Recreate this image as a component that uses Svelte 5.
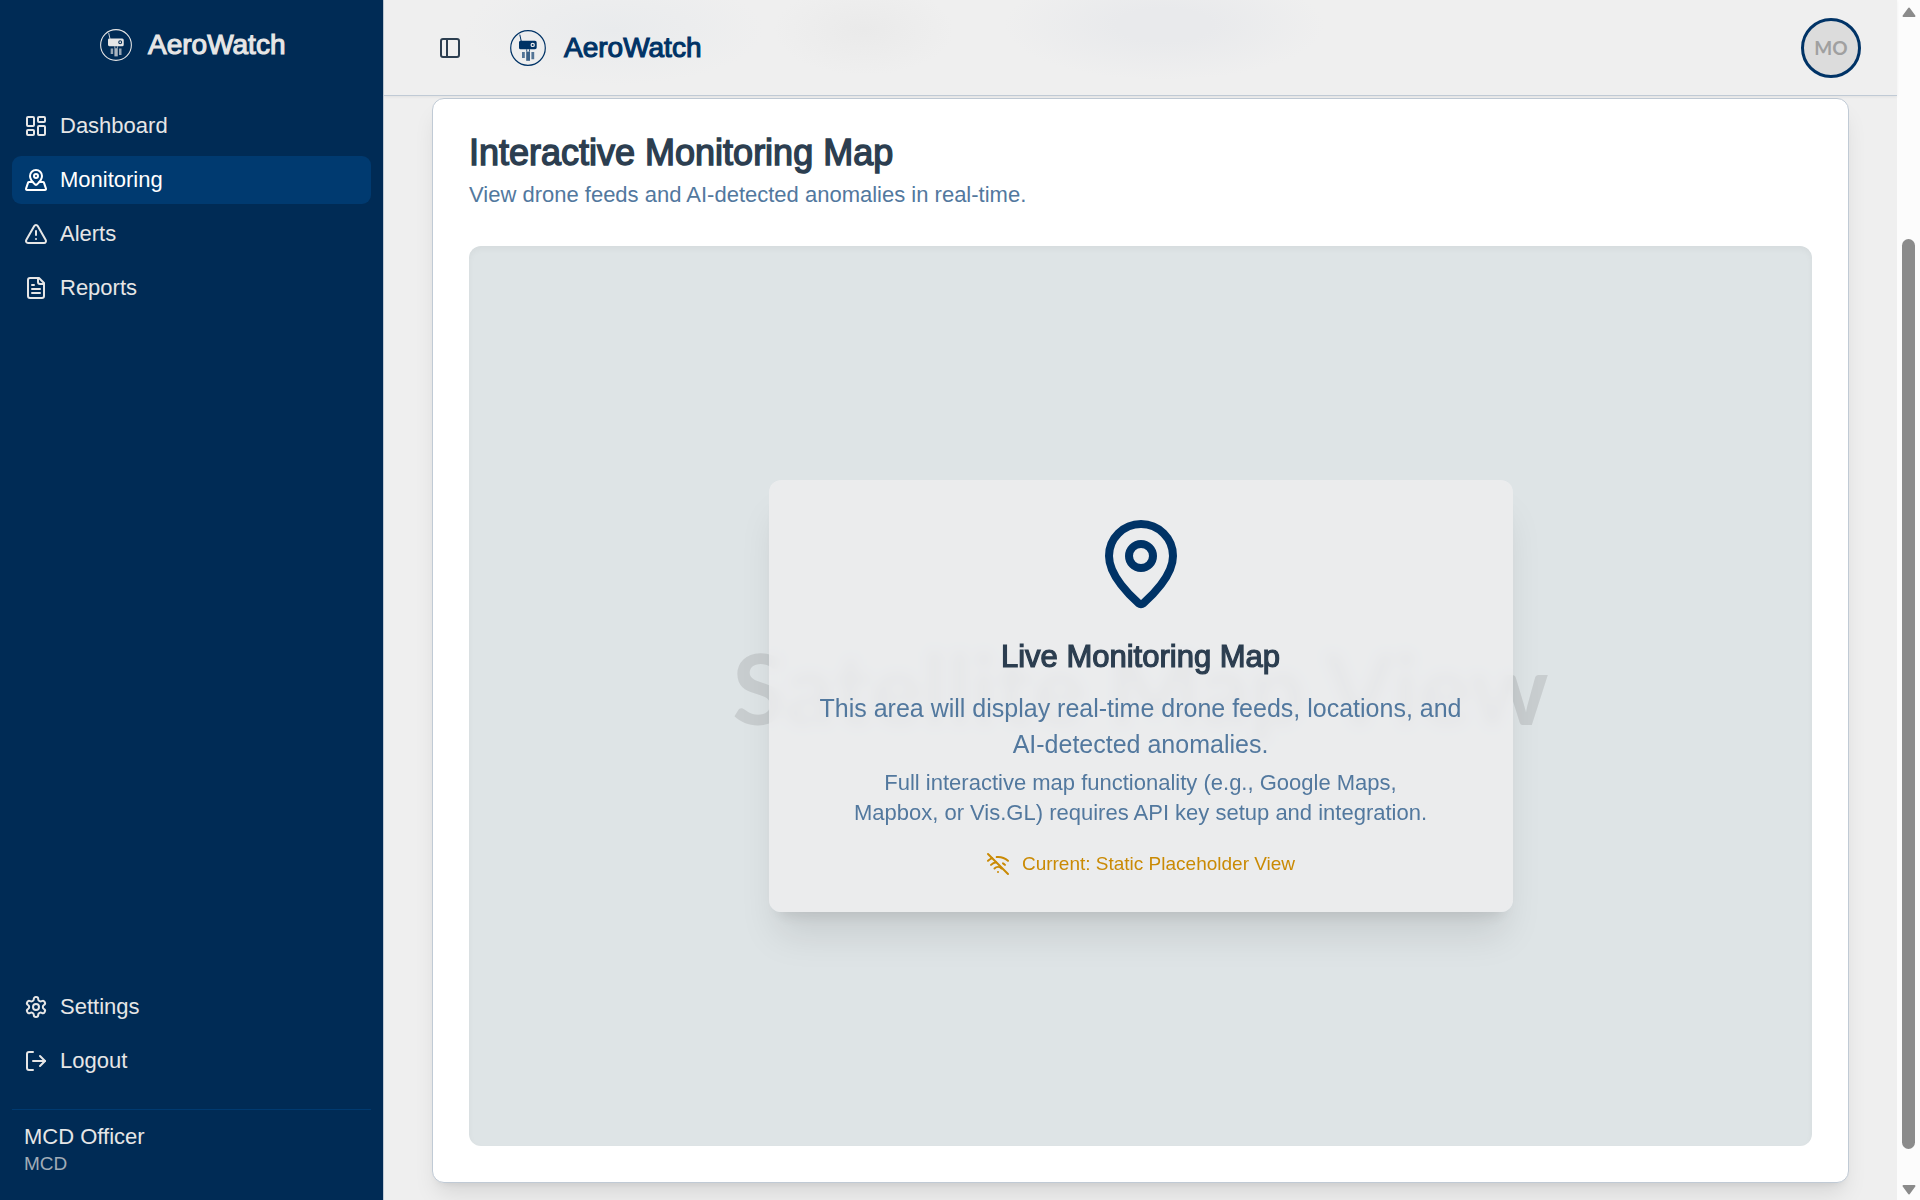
<script>
  const mainNav = [
    { label: 'Dashboard', icon: 'dashboard' },
    { label: 'Monitoring', icon: 'monitoring', active: true },
    { label: 'Alerts', icon: 'alerts' },
    { label: 'Reports', icon: 'reports' }
  ];
</script>

{#snippet logo()}
  <svg class="logo" viewBox="0 0 36 36" aria-hidden="true">
    <circle cx="18" cy="18" r="17.3" fill="none" stroke="currentColor" stroke-width="1.2" />
    <path d="M9.8 4.6 11.2 11" stroke="currentColor" stroke-width="1" fill="none" />
    <path fill="currentColor" fill-rule="evenodd" d="M10.5 10.7H25a1.7 1.7 0 0 1 1.7 1.7v5.2a1.7 1.7 0 0 1-1.7 1.7H10.5A1.5 1.5 0 0 1 9 17.800v-5.600a1.500 1.500 0 0 1 1.500-1.500ZM22.700 12.700a2.200 2.200 0 1 0 0 4.400 2.200 2.200 0 0 0 0-4.400Z" />
    <circle cx="22.700" cy="14.900" r="1" fill="currentColor" />
    <g fill="currentColor">
      <path opacity=".65" d="M12 22h2.800v6H12zM21.400 22h2.800v7.300h-2.800z" />
      <path opacity=".75" d="M16.200 21.600h3.800v9.200h-3.800z" />
      <path opacity=".8" d="M16.200 19.300h1v2.300h-1zM19 19.300h1v2.300h-1z" />
    </g>
  </svg>
{/snippet}

{#snippet icon(name)}
  <svg class="icon" viewBox="0 0 24 24" fill="none" stroke="currentColor" stroke-width="2" stroke-linecap="round" stroke-linejoin="round" aria-hidden="true">
    {#if name === 'dashboard'}
      <rect width="7" height="9" x="3" y="3" rx="1" /><rect width="7" height="5" x="14" y="3" rx="1" />
      <rect width="7" height="9" x="14" y="12" rx="1" /><rect width="7" height="5" x="3" y="16" rx="1" />
    {:else if name === 'monitoring'}
      <path d="M18 8c0 3.613-3.869 7.429-5.393 8.795a1 1 0 0 1-1.214 0C9.870 15.429 6 11.613 6 8a6 6 0 0 1 12 0" />
      <circle cx="12" cy="8" r="2" />
      <path d="M8.714 14h-3.710a1 1 0 0 0-.948.683l-2.004 6A1 1 0 0 0 3 22h18a1 1 0 0 0 .948-1.316l-2-6a1 1 0 0 0-.949-.684h-3.712" />
    {:else if name === 'alerts'}
      <path d="m21.730 18-8-14a2 2 0 0 0-3.480 0l-8 14A2 2 0 0 0 4 21h16a2 2 0 0 0 1.730-3" /><path d="M12 9v4" /><path d="M12 17h.01" />
    {:else if name === 'reports'}
      <path d="M15 2H6a2 2 0 0 0-2 2v16a2 2 0 0 0 2 2h12a2 2 0 0 0 2-2V7Z" /><path d="M14 2v4a2 2 0 0 0 2 2h4" />
      <path d="M10 9H8" /><path d="M16 13H8" /><path d="M16 17H8" />
    {:else if name === 'settings'}
      <path d="M12.220 2h-.44a2 2 0 0 0-2 2v.18a2 2 0 0 1-1 1.730l-.43.25a2 2 0 0 1-2 0l-.15-.08a2 2 0 0 0-2.730.73l-.22.38a2 2 0 0 0 .73 2.730l.15.1a2 2 0 0 1 1 1.720v.51a2 2 0 0 1-1 1.740l-.15.09a2 2 0 0 0-.73 2.730l.22.38a2 2 0 0 0 2.730.73l.15-.08a2 2 0 0 1 2 0l.43.25a2 2 0 0 1 1 1.730V20a2 2 0 0 0 2 2h.44a2 2 0 0 0 2-2v-.18a2 2 0 0 1 1-1.730l.43-.25a2 2 0 0 1 2 0l.15.08a2 2 0 0 0 2.730-.73l.22-.39a2 2 0 0 0-.73-2.730l-.15-.08a2 2 0 0 1-1-1.740v-.5a2 2 0 0 1 1-1.740l.15-.09a2 2 0 0 0 .73-2.730l-.22-.38a2 2 0 0 0-2.730-.73l-.15.08a2 2 0 0 1-2 0l-.43-.25a2 2 0 0 1-1-1.730V4a2 2 0 0 0-2-2z" />
      <circle cx="12" cy="12" r="3" />
    {:else if name === 'logout'}
      <path d="M9 21H5a2 2 0 0 1-2-2V5a2 2 0 0 1 2-2h4" /><path d="m16 17 5-5-5-5" /><path d="M21 12H9" />
    {:else if name === 'panel'}
      <rect width="18" height="18" x="3" y="3" rx="2" /><path d="M9 3v18" />
    {:else if name === 'pin'}
      <path d="M20 10c0 4.993-5.539 10.193-7.399 11.799a1 1 0 0 1-1.202 0C9.539 20.193 4 14.993 4 10a8 8 0 0 1 16 0" /><circle cx="12" cy="10" r="3" />
    {:else if name === 'wifi-off'}
      <path d="M12 20h.01" /><path d="M8.500 16.429a5 5 0 0 1 7 0" /><path d="M5 12.859a10 10 0 0 1 5.170-2.690" />
      <path d="M19 12.859a10 10 0 0 0-2.007-1.523" /><path d="M2 8.820a15 15 0 0 1 4.177-2.643" />
      <path d="M22 8.820a15 15 0 0 0-11.288-3.764" /><path d="m2 2 20 20" />
    {/if}
  </svg>
{/snippet}

<div class="app">
  <aside class="sidebar">
    <div class="brand">{@render logo()}<span>AeroWatch</span></div>
    <nav class="menu" aria-label="Main">
      {#each mainNav as item}
        <a class="item" class:active={item.active} href="#{item.icon}" aria-current={item.active ? 'page' : undefined}>
          {@render icon(item.icon)}<span>{item.label}</span>
        </a>
      {/each}
    </nav>
    <div class="foot">
      <a class="item" href="#settings">{@render icon('settings')}<span>Settings</span></a>
      <button class="item" type="button">{@render icon('logout')}<span>Logout</span></button>
      <div class="user">
        <p class="name">MCD Officer</p>
        <p class="role">MCD</p>
      </div>
    </div>
  </aside>

  <div class="page">
    <header class="topbar">
      <button class="toggle" type="button" aria-label="Toggle sidebar">{@render icon('panel')}</button>
      <div class="brand">{@render logo()}<span>AeroWatch</span></div>
      <button class="avatar" type="button" aria-label="Account menu">MO</button>
    </header>
    <main class="content">
      <section class="card">
        <h1>Interactive Monitoring Map</h1>
        <p class="lead">View drone feeds and AI-detected anomalies in real-time.</p>
        <div class="map">
          <span class="watermark">Satellite Map View</span>
          <div class="notice">
            <div class="pin">{@render icon('pin')}</div>
            <h2>Live Monitoring Map</h2>
            <p class="big">This area will display real-time drone feeds, locations, and AI-detected anomalies.</p>
            <p class="small">Full interactive map functionality (e.g., Google Maps, Mapbox, or Vis.GL) requires API key setup and integration.</p>
            <p class="status">{@render icon('wifi-off')}<span>Current: Static Placeholder View</span></p>
          </div>
        </div>
      </section>
    </main>
  </div>

  <div class="scrollbar" aria-hidden="true">
    <svg viewBox="0 0 14 10"><path d="M7 1.500 12.500 9h-11z" /></svg>
    <div class="track"><div class="thumb"></div></div>
    <svg viewBox="0 0 14 10"><path d="M7 8.500 12.500 1h-11z" /></svg>
  </div>
</div>

<style>
  :global(body) {
    margin: 0;
    background: #efefef;
  }
  .app {
    display: grid;
    grid-template-columns: 384px minmax(0, 1fr) 23px;
    height: 100vh;
    overflow: hidden;
    font-family: 'Liberation Sans', Arial, sans-serif;
    font-size: 22px;
    line-height: 30px;
    color: #2c3e50;
  }
  .app *, .app {
    box-sizing: border-box;
  }
  h1, h2, p {
    margin: 0;
    font-weight: 400;
  }
  button {
    font: inherit;
    color: inherit;
    background: none;
    border: 0;
    cursor: pointer;
  }
  .icon {
    display: block;
    flex: none;
    width: 24px;
    height: 24px;
  }
  .brand {
    display: flex;
    align-items: center;
    gap: 18px;
    font-size: 28px;
    line-height: 42px;
    -webkit-text-stroke: 0.04em currentColor;
  }
  .logo {
    flex: none;
    width: 36px;
    height: 36px;
  }

  .sidebar {
    display: flex;
    flex-direction: column;
    background: #002b55;
    border-right: 1px solid #c0cad5;
    color: #e6e6e6;
  }
  .sidebar .brand {
    padding: 24px 12px 24px 100px;
    gap: 16px;
  }
  .sidebar .logo {
    width: 32px;
    height: 32px;
  }
  .menu, .foot {
    display: flex;
    flex-direction: column;
    gap: 6px;
    padding: 12px;
  }
  .foot {
    margin-top: auto;
  }
  .item {
    display: flex;
    align-items: center;
    gap: 12px;
    height: 48px;
    padding: 0 12px;
    border-radius: 9px;
    color: #e6e6e6;
    text-align: left;
    text-decoration: none;
  }
  .active {
    background: #003a70;
    color: #fff;
  }
  .user {
    margin-top: 18px;
    padding: 12px;
    border-top: 1px solid #003a70;
  }
  .role {
    font-size: 19px;
    line-height: 24px;
    color: #a1acb7;
  }

  .page {
    display: flex;
    flex-direction: column;
    min-width: 0;
  }
  .topbar {
    position: relative;
    z-index: 1;
    display: flex;
    align-items: center;
    flex: none;
    height: 96px;
    padding: 0 36px 0 48px;
    border-bottom: 1px solid #c0cad5;
    box-shadow: 0 1px 3px rgb(0 0 0 / 6%);
    background:
      radial-gradient(closest-side, #e9ebed, transparent) 80px -25px / 300px 110px no-repeat,
      radial-gradient(closest-side, #eaeaea, transparent) 390px -15px / 180px 90px no-repeat,
      radial-gradient(closest-side, #e9eaec 30%, transparent) 620px -30px / 320px 110px no-repeat,
      #efefef;
  }
  .toggle {
    padding: 6px;
    margin-right: 42px;
  }
  .topbar .brand {
    color: #003366;
  }
  .avatar {
    width: 60px;
    height: 60px;
    margin-left: auto;
    padding: 0;
    border: 3px solid #003366;
    border-radius: 50%;
    background: #dcdcdc;
    color: #a0a0a0;
    font: 700 19px/24px Lato, sans-serif;
  }
  .content {
    flex: 1;
    min-height: 0;
    padding: 2px 48px 0;
    overflow: hidden;
  }
  .card {
    padding: 36px;
    border: 1px solid #c0cad5;
    border-radius: 12px;
    background: #fff;
    box-shadow: 0 15px 23px -5px rgb(0 0 0 / 10%), 0 6px 9px -6px rgb(0 0 0 / 10%);
  }
  h1 {
    font-size: 36px;
    line-height: 36px;
    -webkit-text-stroke: 0.04em currentColor;
  }
  .lead {
    margin: 9px 0 36px;
    color: #52789e;
  }
  .map {
    display: grid;
    place-items: center;
    height: 900px;
    border-radius: 12px;
    background: #dee4e6;
    box-shadow: inset 0 3px 6px rgb(0 0 0 / 4%);
  }
  .map > * {
    grid-area: 1 / 1;
  }
  .watermark {
    padding-bottom: 18px;
    font: 700 98px/120px Lato, sans-serif;
    color: #c8cdcf;
    white-space: nowrap;
  }
  .notice {
    z-index: 1;
    display: flex;
    flex-direction: column;
    align-items: center;
    width: 100%;
    max-width: 744px;
    padding: 36px;
    border-radius: 12px;
    background: rgb(238 238 239 / 80%);
    backdrop-filter: blur(6px);
    box-shadow: 0 30px 38px -8px rgb(0 0 0 / 10%), 0 12px 15px -9px rgb(0 0 0 / 10%);
    text-align: center;
    color: #52789e;
  }
  .pin .icon {
    width: 96px;
    height: 96px;
    color: #003366;
  }
  h2 {
    margin: 24px 0 12px;
    font-size: 31px;
    line-height: 42px;
    color: #2c3e50;
    -webkit-text-stroke: 0.04em currentColor;
  }
  .big {
    font-size: 25px;
    line-height: 36px;
  }
  .small {
    max-width: 576px;
    margin-top: 6px;
  }
  .status {
    display: flex;
    align-items: center;
    gap: 12px;
    margin-top: 24px;
    font-size: 19px;
    line-height: 24px;
    color: #ca8a04;
  }

  .scrollbar {
    display: flex;
    flex-direction: column;
    align-items: center;
    padding: 7px 0 5px;
    background: #fcfcfc;
  }
  .scrollbar svg {
    width: 14px;
    height: 10px;
    fill: #8b8b8b;
    stroke: #8b8b8b;
    stroke-width: 2px;
    stroke-linejoin: round;
  }
  .track {
    display: flex;
    flex-direction: column;
    flex: 1;
    padding: 222px 0 36px;
  }
  .thumb {
    flex: 1;
    width: 13px;
    border-radius: 7px;
    background: #8b8b8b;
  }
</style>
